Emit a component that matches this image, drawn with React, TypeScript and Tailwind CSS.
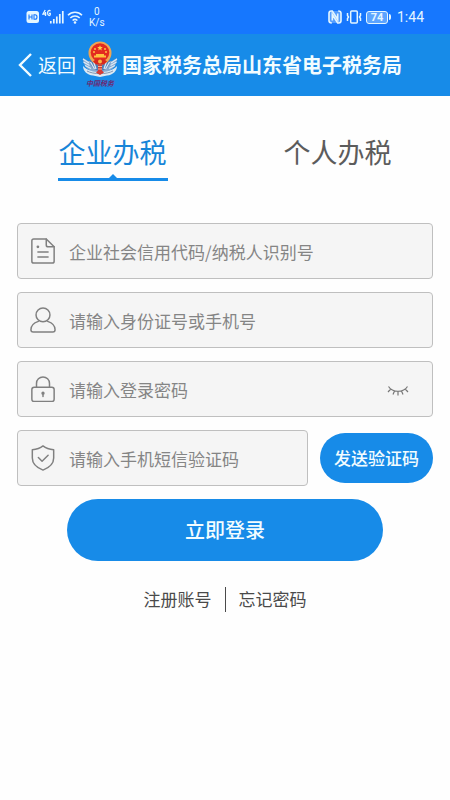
import { useState } from "react";
import type { InputHTMLAttributes, ReactNode } from "react";
import clsx from "clsx";

function StatusBar() {
  return (
    <div className="flex h-[34px] items-center justify-between bg-[#1677fe] pr-[26px] pl-[26px] text-[#e4f6ff]">
      <div className="flex items-center">
        <svg className="h-[14px] w-[14px]" viewBox="0 0 14 14" fill="none">
          <rect x="0.5" y="1" width="12.5" height="12" rx="2.5" fill="#e4f6ff" />
          <path
            d="M3 4.5v5M6 4.5v5M3 7h3M8 4.700v4.600h1c1.400 0 2-.9 2-2.300s-.6-2.300-2-2.300z"
            stroke="#1677fe"
            strokeWidth="1.1"
          />
        </svg>
        <svg className="ml-[2px] h-[16px] w-[22px]" viewBox="0 0 22 16" fill="none">
          <path
            d="M3.200 1L1 5h3.300M3.500 3v4M8.300 2.300C7.800 1 5.600 1 5.600 4s2.700 3 2.700 1.500V4.300H7"
            stroke="currentColor"
            strokeWidth="1.300"
          />
          <path
            d="M8.800 12v2.500M11.800 10v4.500M14.800 7.500v7M17.800 5v9.500M20.800 2v12.500"
            stroke="currentColor"
            strokeWidth="1.700"
          />
        </svg>
        <svg className="ml-[3px] h-[14px] w-[16px]" viewBox="0 0 16 14" fill="none">
          <path
            d="M1 5.200c4-4 10-4 14 0M3.300 8c2.700-2.600 6.700-2.600 9.400 0M5.600 10.500c1.400-1.300 3.400-1.300 4.800 0"
            stroke="currentColor"
            strokeWidth="1.600"
          />
          <circle cx="8" cy="12.500" r="1.300" fill="currentColor" />
        </svg>
        <div className="ml-[6px] text-center font-[Roboto,sans-serif] text-[10px] leading-[11px]">
          <div>0</div>
          <div>K/s</div>
        </div>
      </div>
      <div className="flex items-center">
        <svg className="h-[14px] w-[14px]" viewBox="0 0 14 14" fill="none">
          <rect x="1" y="1" width="12" height="12" rx="2.500" fill="currentColor" opacity="0.300" />
          <path
            d="M3.800 13C1.800 13 1 12.300 1 10.800V3.200C1 1.700 1.800 1 3.300 1h1L9.700 9.500V3.500M10.200 1c2 0 2.800.7 2.800 2.200v7.600c0 1.500-.8 2.200-2.300 2.200h-1L4.300 4.500v6"
            stroke="currentColor"
            strokeWidth="1.600"
          />
        </svg>
        <svg className="ml-[4px] h-[14px] w-[16px]" viewBox="0 0 16 14" fill="none">
          <rect x="4.700" y="1" width="6.600" height="12" rx="1" stroke="currentColor" strokeWidth="1.500" />
          <path
            d="M1.500 3v2.500l1 1.500-1 1.500V11M14.500 3v2.500l-1 1.500 1 1.500V11"
            stroke="currentColor"
            strokeWidth="1.500"
          />
        </svg>
        <div className="ml-[4px] flex h-[13px] w-[22px] items-center justify-center rounded-[3px] border border-[#e4f6ff] bg-[#5ba4ff] font-[Roboto,sans-serif] text-[11px] leading-none font-bold">
          74
        </div>
        <div className="ml-px h-[6px] w-[2px] rounded-r bg-[#e4f6ff]" />
        <div className="ml-[6px] font-[Roboto,sans-serif] text-[14px] leading-none">1:44</div>
      </div>
    </div>
  );
}

function TaxEmblem() {
  return (
    <svg className="h-[48px] w-[36px] shrink-0" viewBox="0 0 36 48" role="img" aria-label="中国税务">
      {/* silver wings */}
      <path d="M1 17c0 8 5 14 17 15 12-1 17-7 17-15l-5 3H6z" fill="#87a9cf" />
      <path
        d="M1 18l6 4M1.500 21l6 3.500M3 24.500l6 3M35 18l-6 4M34.500 21l-6 3.500M33 24.500l-6 3"
        stroke="#dceaf6"
        strokeWidth="1.300"
      />
      <path d="M1 25c4 4 10 6 17 6s13-2 17-6c0 5-4 9-10 9.500l-7 1.500-7-1.500C5 34 1 30 1 25z" fill="#dce9f3" />
      <path d="M5 30c6 3.500 20 3.500 26 0" stroke="#8096b3" strokeWidth="1" fill="none" />
      <circle cx="18" cy="20" r="10" fill="#4f7db5" />
      <path
        d="M8.500 21l4 7M11 19l3 9M27.500 21l-4 7M25 19l-3 9"
        stroke="#d9e8f5"
        strokeWidth="1.300"
      />
      {/* national emblem */}
      <ellipse cx="18" cy="12" rx="11.500" ry="11.500" fill="#f0a552" />
      <ellipse cx="18" cy="11.500" rx="9.300" ry="9.300" fill="#e32a20" />
      <path d="M18 4.200l.8 1.900h2l-1.600 1.300.6 2-1.800-1.200-1.800 1.200.6-2-1.600-1.300h2z" fill="#ffd24a" />
      <circle cx="13" cy="8" r="0.900" fill="#ffd24a" />
      <circle cx="23" cy="8" r="0.900" fill="#ffd24a" />
      <circle cx="12" cy="11" r="0.900" fill="#ffd24a" />
      <circle cx="24" cy="11" r="0.900" fill="#ffd24a" />
      <path d="M12 16.500v-2h2v-1.500h8v1.500h2v2z" fill="#ffc23e" />
      <path d="M11 20.500c2-2 4-2.500 7-2.500s5 .5 7 2.500l-3 3h-8z" fill="#d8281f" />
      <circle cx="18" cy="20.500" r="2" fill="#f7b541" />
      {/* key handle */}
      <path d="M16 23.500h4v6l2 2-4 2.500-4-2.500 2-2z" fill="#d63a34" />
      <path d="M16 25.500h4M16 28h4" stroke="#f5d7b0" strokeWidth="0.800" />
      <text
        x="18"
        y="45"
        textAnchor="middle"
        fontSize="7"
        fontWeight="700"
        fontStyle="italic"
        fontFamily="'Noto Sans CJK SC', sans-serif"
        fill="#6b2a74"
      >
        中国税务
      </text>
    </svg>
  );
}

function Header() {
  return (
    <header className="flex h-[62px] items-center bg-[#178be8] pl-[18px] text-[#f2fcff]">
      <button type="button" className="flex shrink-0 items-center gap-[5px] text-[19px] leading-[28px]">
        <svg className="h-[26px] w-[15px]" viewBox="0 0 15 26" fill="none">
          <path d="M13 2L2 13l11 11" stroke="currentColor" strokeWidth="2.400" />
        </svg>
        返回
      </button>
      <div className="ml-[6px]">
        <TaxEmblem />
      </div>
      <h1 className="ml-[4px] text-[20px] leading-[28px] font-bold whitespace-nowrap">
        国家税务总局山东省电子税务局
      </h1>
    </header>
  );
}

type TabProps = {
  label: string;
  active: boolean;
  onClick: () => void;
};

function Tab({ label, active, onClick }: TabProps) {
  return (
    <button
      type="button"
      role="tab"
      aria-selected={active}
      onClick={onClick}
      className={clsx(
        "relative justify-self-center border-b-[3px] px-px pb-[8px] text-[27px] leading-[36px]",
        active ? "border-[#178be8] text-[#1785d8]" : "border-transparent text-[#5c5c5c]"
      )}
    >
      {label}
      {active && (
        <svg className="absolute bottom-0 left-1/2 h-[4px] w-[8px] -translate-x-1/2" viewBox="0 0 8 4">
          <path d="M0 4l4-4 4 4z" fill="#178be8" />
        </svg>
      )}
    </button>
  );
}

type FieldProps = InputHTMLAttributes<HTMLInputElement> & {
  id: string;
  icon: ReactNode;
  action?: ReactNode;
};

function Field({ id, icon, action, placeholder, ...rest }: FieldProps) {
  return (
    <div className="flex h-[56px] w-full min-w-0 items-center rounded-[4px] border border-[#bfbfbf] bg-[#f5f5f5] pl-[12px]">
      <label htmlFor={id} aria-label={placeholder} className="shrink-0">
        <svg
          className="h-[26px] w-[26px]"
          viewBox="0 0 28 28"
          fill="none"
          stroke="#808080"
          strokeWidth="1.600"
          strokeLinecap="round"
          strokeLinejoin="round"
        >
          {icon}
        </svg>
      </label>
      <input
        id={id}
        placeholder={placeholder}
        className="ml-[13px] h-full min-w-0 flex-1 bg-transparent text-[17px] text-[#444444] outline-none placeholder:text-[#858585]"
        {...rest}
      />
      {action}
    </div>
  );
}

const docIcon = (
  <>
    <path d="M17.500 1H4a2 2 0 0 0-2 2v22a2 2 0 0 0 2 2h20a2 2 0 0 0 2-2V9.500z" />
    <path d="M17.500 1v6.500a2 2 0 0 0 2 2H26M8.500 15h11M8.500 20.500h11" />
    <circle cx="8.500" cy="9.500" r="0.700" fill="#808080" />
  </>
);

const userIcon = (
  <>
    <circle cx="14" cy="8.500" r="7.500" />
    <path d="M9 15.500C4.500 17 1 20 1 24.500 1 26 2 27 3.500 27h21c1.500 0 2.500-1 2.500-2.500 0-4.500-3.500-7.500-8-9" />
  </>
);

const lockIcon = (
  <>
    <rect x="2" y="12" width="24" height="15.500" rx="2.500" />
    <path d="M7 12V8a7 7 0 0 1 14 0v4M14 19v3" />
    <circle cx="14" cy="18.500" r="1" fill="#808080" />
  </>
);

const shieldIcon = (
  <>
    <path d="M14 1c3 2.400 7 3.700 11.500 4v9c0 6.500-5 10.500-11.500 13C7.500 24.500 2.500 20.500 2.500 14V5C7 4.700 11 3.400 14 1z" />
    <path d="M9 13.500l4 4 6.500-6.500" />
  </>
);

export default function App() {
  const [tab, setTab] = useState("company");
  const [visible, setVisible] = useState(false);

  return (
    <div className="min-h-screen bg-[#fefefe] font-['Noto_Sans_CJK_SC',sans-serif]">
      <StatusBar />
      <Header />
      <main className="px-[17px] pt-[38px]">
        <div role="tablist" className="-mx-[17px] grid grid-cols-2">
          <Tab label="企业办税" active={tab === "company"} onClick={() => setTab("company")} />
          <Tab label="个人办税" active={tab === "person"} onClick={() => setTab("person")} />
        </div>
        <form className="mt-[42px] flex flex-col gap-[13px]" onSubmit={(e) => e.preventDefault()}>
          <Field id="code" icon={docIcon} placeholder="企业社会信用代码/纳税人识别号" />
          <Field id="account" icon={userIcon} placeholder="请输入身份证号或手机号" />
          <Field
            id="password"
            icon={lockIcon}
            type={visible ? "text" : "password"}
            placeholder="请输入登录密码"
            action={
              <button
                type="button"
                aria-label="显示密码"
                className="mr-[23px] shrink-0"
                onClick={() => setVisible(!visible)}
              >
                <svg className="h-[16px] w-[22px]" viewBox="0 0 22 16" fill="none" stroke="#777777" strokeWidth="1.200">
                  <path d="M1.500 5.500c4 6.300 15 6.300 19 0M3.800 8L1 11M7.500 10L6 13.500M11 10.500v4M14.500 10L16 13.500M18.200 8L21 11" />
                </svg>
              </button>
            }
          />
          <div className="flex items-center gap-[12px]">
            <Field id="sms" icon={shieldIcon} placeholder="请输入手机短信验证码" />
            <button
              type="button"
              className="h-[50px] shrink-0 rounded-full bg-[#178be8] px-[14px] text-[17px] font-medium text-[#f2fcff]"
            >
              发送验证码
            </button>
          </div>
          <button
            type="submit"
            className="mx-[50px] h-[62px] rounded-full bg-[#178be8] text-[20px] font-medium text-[#f2fcff]"
          >
            立即登录
          </button>
        </form>
        <div className="mt-[25px] flex items-center justify-center text-[17px] leading-[26px] text-[#4a4a4a]">
          <a href="#register">注册账号</a>
          <span className="mx-[13px] h-[25px] w-px bg-[#4a4a4a]" />
          <a href="#forgot">忘记密码</a>
        </div>
      </main>
    </div>
  );
}
